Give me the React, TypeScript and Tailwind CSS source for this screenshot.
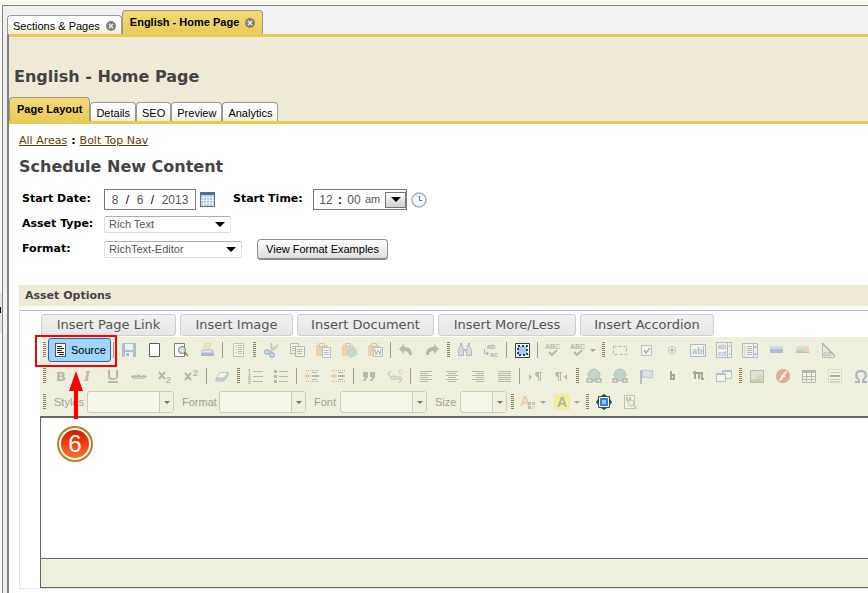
import React from "react";

const G = "#4d5a52";
const B = "#3c55b0";

const icons: Record<string, React.ReactNode> = {
  save: (
    <>
      <path fill="#3564c4" d="M1 1h14v14H2L1 14z" />
      <path fill="#f4f6ff" d="M4 2h8v6H4zM4 10h8v5H4z" />
      <path fill="#3564c4" d="M5 11h3v3H5z" />
    </>
  ),
  page: <path fill="#fff" stroke="#47524f" d="M2.500 1.500h10v13h-10z" />,
  preview: (
    <>
      <path fill="#fff" stroke="#5b6b66" d="M1.500 1.500h10v13h-10z" />
      <circle cx="9" cy="8" r="3.500" fill="#d0e0e4" stroke="#5b6b66" />
      <path stroke="#4b5a55" strokeWidth="2" d="M11.500 10.500l2 2" />
      <path stroke="#e08030" strokeWidth="2" d="M13 12l2 2" />
    </>
  ),
  print: (
    <>
      <path fill="#f7cf94" stroke="#d9a055" d="M6.500 1.500h5l-1 6h-6z" />
      <path fill="#7f9fe0" d="M2 9l2-2h8l3 2v3H2z" />
      <path fill="#2f50a8" d="M2 11h13v3H2z" />
      <path fill="#e9edff" d="M4 9h8v1H4z" />
    </>
  ),
  template: (
    <>
      <path fill="#fff" stroke="#6c7570" d="M3.500 1.500h10v13h-10z" />
      <path stroke="#ce9a3f" d="M5 4.500h2M5 7.500h2M5 10.500h2" />
      <path stroke="#5b6660" d="M8 3.500h4M8 5.500h4M8 7.500h4M8 9.500h4M8 11.500h4" />
    </>
  ),
  cut: (
    <>
      <path stroke="#7d8a96" strokeWidth="2" fill="none" d="M8 1l1 8M15 3L7 10" />
      <circle cx="4" cy="10" r="2" fill="none" stroke="#3667c9" strokeWidth="2" />
      <circle cx="9" cy="13" r="2" fill="none" stroke="#3667c9" strokeWidth="2" />
    </>
  ),
  copy: (
    <>
      <path fill="#fff" stroke={G} d="M1.500 1.500h8v10h-8z" />
      <path stroke={G} d="M3 4.500h4M3 6.500h4M3 8.500h4" />
      <path fill="#fff" stroke={G} d="M6.500 4.500h9v10h-9z" />
      <path stroke={G} d="M8 7.500h5M8 9.500h5M8 11.500h5" />
    </>
  ),
  paste: (
    <>
      <path fill="#eda251" d="M1 3h12v11H1z" />
      <path fill="#f7e3c4" stroke="#9b7c53" d="M4.500 1.500h5v3h-5z" />
      <path fill="#fff" stroke="#4c6fc0" d="M7.500 5.500h8v10h-8z" />
      <path stroke="#4c6fc0" d="M9 8.500h5M9 10.500h5M9 12.500h5" />
    </>
  ),
  pasteText: (
    <>
      <path fill="#eda251" d="M1 3h12v11H1z" />
      <path fill="#f7e3c4" stroke="#9b7c53" d="M4.500 1.500h5v3h-5z" />
      <path fill="#6fc0d8" stroke="#5396b3" d="M6.500 8.500l8-2 1 6-6 3z" />
    </>
  ),
  pasteWord: (
    <>
      <path fill="#eda251" d="M1 3h12v11H1z" />
      <path fill="#f7e3c4" stroke="#9b7c53" d="M4.500 1.500h5v3h-5z" />
      <path fill="#fff" stroke="#4c6fc0" d="M6.500 5.500h9v9h-9z" />
      <path fill="none" stroke="#2c3c6c" d="M8 7.500l1 5 2-4 2 4 1-5" />
    </>
  ),
  undo: <path fill={G} d="M1 7l5-5v3c5 0 8 2 8 8h-3c0-3-2-4-5-4v3z" />,
  redo: <path fill={G} d="M15 7l-5-5v3c-5 0-8 2-8 8h3c0-3 2-4 5-4v3z" />,
  find: (
    <>
      <path fill="#b5bdea" stroke="#4c5bad" d="M3.500 3.500h2l1 5v5h-5v-5zM10.500 3.500h2l2 5v5h-5v-5z" />
      <path stroke="#4c5bad" strokeWidth="2" d="M6 8h4M4 1v3M12 1v3" />
    </>
  ),
  replace: (
    <>
      <text x="4" y="7" fontSize="7" fontWeight="bold" fill="#3e4aa0">ab</text>
      <path fill="none" stroke="#3e4aa0" d="M1.500 7v4.500h4M3.500 9.500l2 2-2 2" />
      <text x="7" y="15" fontSize="7" fontWeight="bold" fill="#6a50a0">ac</text>
    </>
  ),
  selectAll: (
    <>
      <path fill="#fff" stroke="#234651" d="M1.500 1.500h14v14h-14z" />
      <path fill="#a8c6f3" stroke="#1d4655" strokeWidth="2" strokeDasharray="2 2" d="M4 4h9v9H4z" />
    </>
  ),
  spell: (
    <>
      <text x="0" y="7" fontSize="7" fontWeight="bold" fill={G}>ABC</text>
      <path fill="none" stroke={G} strokeWidth="2" d="M4 10l3 3 5-5" />
    </>
  ),
  form: <path fill="none" stroke="#3c4c8c" strokeDasharray="3 2" d="M1.500 4.500h13v8h-13z" />,
  check: (
    <>
      <path fill="#fff" stroke="#6474a8" d="M3.500 3.500h10v10h-10z" />
      <path fill="none" stroke="#35477f" strokeWidth="1.500" d="M6 8l2 3 4-5" />
    </>
  ),
  radio: (
    <>
      <circle cx="8" cy="8" r="3.500" fill="#fff" stroke="#4c63b5" />
      <circle cx="8" cy="8" r="1.500" fill="#20304f" />
    </>
  ),
  textField: (
    <>
      <path fill="#fff" stroke={B} d="M.5 2.500h15v12H.5z" />
      <text x="2" y="12" fontSize="9" fontWeight="bold" fill={B}>ab</text>
      <path stroke={B} d="M13.500 4v9" />
    </>
  ),
  textarea: (
    <>
      <path fill="#fff" stroke={B} d="M.5 .5h15v15H.5zM11.500 1v14" />
      <text x="2" y="7" fontSize="7" fontWeight="bold" fill={B}>ab</text>
      <text x="2" y="14" fontSize="7" fontWeight="bold" fill={B}>cd</text>
      <path stroke={B} d="M13.500 3v2M13.500 11v2" />
    </>
  ),
  list: (
    <>
      <path fill="#fff" stroke={B} d="M.5 1.500h15v14H.5z" />
      <path fill="#f2c37c" d="M2 3h2v11H2z" />
      <path stroke={B} d="M5 4.500h5M5 6.500h5M5 8.500h5M5 10.500h5M5 12.500h5M11.500 2v13" />
      <path stroke="#2b4c95" strokeWidth="2" d="M13.500 4v2M13.500 11v2" />
    </>
  ),
  button: (
    <>
      <path fill="#97b4ee" d="M2 4h13v7H2z" />
      <path fill="#3c67c6" d="M2 7h13v4H2z" />
    </>
  ),
  imageButton: (
    <>
      <path fill="#a9c6f4" d="M2 4h13v7H2z" />
      <path fill="#58a065" d="M2 9l4-2 5 2v2H2z" />
      <path fill="#e7a14c" d="M9 6h6v4H9z" />
      <path fill="#456cb8" d="M2 10h13v1H2z" />
    </>
  ),
  hidden: (
    <>
      <path fill="#dde4f2" d="M2 2l13 13H2z" />
      <text x="3" y="14" fontSize="7" fontWeight="bold" fill={G}>cd</text>
      <path stroke="#3c4640" strokeWidth="1.500" d="M2 1l13 13" />
      <path fill="none" stroke="#4a5ba0" d="M2.500 2v13.500H15" />
    </>
  ),
  bold: <text x="3" y="13" fontSize="13" fontWeight="bold" fontFamily="DejaVu Sans, sans-serif" fill={G}>B</text>,
  italic: <text x="5" y="13" fontSize="13" fontWeight="bold" fontStyle="italic" fontFamily="DejaVu Serif, serif" fill={G}>I</text>,
  underline: (
    <>
      <path fill="none" stroke={G} strokeWidth="2" d="M4 2v6q0 3 4 3t4-3V2" />
      <path stroke={G} strokeWidth="2" d="M3 14h10" />
    </>
  ),
  strike: (
    <>
      <text x="1" y="11" fontSize="8" fontWeight="bold" fill={G}>abc</text>
      <path stroke={G} d="M0 8.500h16" />
    </>
  ),
  sub: (
    <>
      <path stroke={G} strokeWidth="2" d="M2 4l6 7M8 4l-6 7" />
      <text x="9" y="15" fontSize="9" fontWeight="bold" fill={G}>2</text>
    </>
  ),
  sup: (
    <>
      <path stroke={G} strokeWidth="2" d="M2 5l6 7M8 5l-6 7" />
      <text x="10" y="8" fontSize="9" fontWeight="bold" fill={G}>2</text>
    </>
  ),
  eraser: (
    <>
      <path fill="#fff" stroke="#6e7da8" d="M6 4.500h8.500L11 10H2z" />
      <path fill="#7991d6" stroke="#6070a8" d="M2 10.500h8l4-6v3L10 13H2z" />
    </>
  ),
  ol: (
    <>
      <path stroke={G} d="M6 3.500h10M6 8.500h10M6 13.500h10" />
      <path fill="none" stroke={G} d="M1 1.500h1.500V5M1 6.500h2v2H1.500V10H4M1 11.500h2v4H1M1 13.500h2" />
    </>
  ),
  ul: (
    <>
      <path stroke={G} d="M6 3.500h9M6 8.500h9M6 13.500h9" />
      <path stroke={G} strokeWidth="3" d="M1 3.500h3M1 8.500h3M1 13.500h3" />
    </>
  ),
  outdent: (
    <>
      <path stroke={G} strokeDasharray="1 1" d="M2 2.500h13M2 13.500h13" />
      <path stroke={G} d="M8 4.500h5M8 7.500h7M8 8.500h7M8 11.500h5" />
      <path fill="#e79748" d="M0 8l4-3v2h3v2H4v2z" />
    </>
  ),
  indent: (
    <>
      <path stroke={G} strokeDasharray="1 1" d="M2 2.500h13M2 13.500h13" />
      <path stroke={G} d="M8 4.500h5M8 7.500h7M8 8.500h7M8 11.500h5" />
      <path fill="#e79748" d="M7 8L3 5v2H0v2h3v2z" />
    </>
  ),
  quote: <path fill={G} d="M2 4h5v5l-3 4H2l2-4H2zM9 4h5v5l-3 4H9l2-4H9z" />,
  div: (
    <>
      <text x="3" y="12" fontSize="8" fill={G}>div</text>
      <path fill="none" stroke={G} d="M4 3L1 6l3 3M13 9l2 2-3 4" />
      <path fill="none" stroke="#e79748" d="M13.500 1l2 3-2 3-2-3z" />
    </>
  ),
  left: <path stroke={G} d="M2 3.500h12M2 5.500h8M2 7.500h12M2 9.500h8M2 11.500h12M2 13.500h8" />,
  center: <path stroke={G} d="M2 3.500h12M4 5.500h8M2 7.500h12M4 9.500h8M2 11.500h12M4 13.500h8" />,
  right: <path stroke={G} d="M2 3.500h12M6 5.500h8M2 7.500h12M6 9.500h8M2 11.500h12M6 13.500h8" />,
  justify: <path stroke={G} d="M2 3.500h13M2 5.500h13M2 7.500h13M2 9.500h13M2 11.500h13M2 13.500h13" />,
  ltr: (
    <>
      <path fill={B} d="M2 6l3 3-3 3z" />
      <path fill={G} d="M10 4h5v1h-1v8h-1V5h-1v8h-1V9c-3 0-4-5-1-5z" />
    </>
  ),
  rtl: (
    <>
      <path fill={B} d="M14 6l-3 3 3 3z" />
      <path fill={G} d="M4 4h5v1H8v8H7V5H6v8H5V9C2 9 1 4 4 4z" />
    </>
  ),
  link: (
    <>
      <circle cx="8" cy="7" r="6" fill="#719ed9" stroke="#486c9c" />
      <path fill="#5fb650" d="M4 3l4-1-1 5-3 1zM10 3l3 2v4l-3-2z" />
      <path fill="#fff" stroke="#4d5652" strokeWidth="1.500" d="M1 11h5v3H1zM10 11h5v3h-5zM6 12.500h4" />
    </>
  ),
  unlink: (
    <>
      <circle cx="8" cy="7" r="6" fill="#719ed9" stroke="#486c9c" />
      <path fill="#5fb650" d="M4 3l4-1-1 5-3 1zM10 3l3 2v4l-3-2z" />
      <path fill="#fff" stroke="#4d5652" strokeWidth="1.500" d="M1 11h4v3H1zM11 11h4v3h-4z" />
    </>
  ),
  flag: (
    <>
      <path stroke="#5263a5" strokeWidth="2" d="M3 2v14" />
      <path fill="#b7d0f5" stroke="#5d7bb9" d="M4.500 2.500q3-1 5 0t5 0v7q-3 1-5 0t-5 0z" />
    </>
  ),
  letterB: (
    <>
      <path fill="#fff" opacity=".7" d="M1 1h14v14H1z" />
      <path fill="none" stroke="#222" strokeWidth="2" d="M7 3v8h3V7H7" />
    </>
  ),
  letterM: (
    <>
      <path fill="#fff" opacity=".7" d="M1 1h14v14H1z" />
      <path fill="none" stroke="#222" strokeWidth="2" d="M3 5l2-1v7M5 5h4v6M9 5h3v6h2" />
    </>
  ),
  windows: (
    <>
      <path fill="#fff" stroke="#4668b3" d="M6.500 2.500h9v8h-9z" />
      <path fill="#fff" stroke="#4668b3" d="M.5 5.500h9v8h-9z" />
      <path stroke="#4668b3" strokeWidth="2" d="M1 6h8M7 3h8" />
    </>
  ),
  image: (
    <>
      <path fill="#a7cdf5" stroke="#53604c" d="M1.500 2.500h13v12h-13z" />
      <circle cx="6" cy="6" r="2" fill="#efc746" />
      <path fill="#71a857" d="M2 12l6-2 6 2v2H2z" />
      <path fill="#dc9258" d="M8 8l3-2 3 2v3H8z" />
    </>
  ),
  flash: (
    <>
      <circle cx="8" cy="8" r="7" fill="#c7271d" />
      <path fill="none" stroke="#fff" strokeWidth="2" d="M12 4c-4 0-4 8-8 8M6 8h4" />
    </>
  ),
  table: (
    <>
      <path fill="#fff" stroke="#536057" d="M1.500 2.500h13v12h-13zM1.500 8.500h13M1.500 11.500h13M5.500 5v9M10.500 5v9" />
      <path fill="#536057" d="M1 2h14v3H1z" />
    </>
  ),
  hr: (
    <>
      <path fill="#fff" stroke="#b5b9ae" d="M1.500 1.500h13v13h-13z" />
      <path stroke="#7e8a7d" d="M3 4.500h10M3 11.500h10M3 13.500h10" />
      <path stroke="#344239" strokeWidth="2" d="M3 8h10" />
    </>
  ),
  omega: <path fill="none" stroke="#2b4692" strokeWidth="2" d="M2 14h4v-2C2 9 2 3 8 3s6 6 2 9v2h4" />,
  textColor: (
    <>
      <text x="0" y="12" fontSize="14" fontWeight="bold" fill="#e19448">A</text>
      <path fill="#ce4438" d="M8 8h3v3H8z" />
      <path fill="#56a050" d="M12 8h3v3h-3z" />
      <path fill="#4377d0" d="M8 12h3v3H8z" />
      <path fill="#e1c340" d="M12 12h3v3h-3z" />
    </>
  ),
  bgColor: (
    <>
      <path fill="#f8ec33" d="M0 0h16v16H0z" />
      <text x="3" y="13" fontSize="14" fontWeight="bold" fill="#37433b">A</text>
    </>
  ),
  maximize: (
    <>
      <path fill="#fff" stroke="#315559" d="M2.500 2.500h11v11h-11z" />
      <path fill="#2f82e4" d="M4 4h8v8H4z" />
      <path fill="#98c8fa" d="M6 6h4v4H6z" />
      <path fill="#234c52" d="M8 0l3 2H5zM8 16l3-2H5zM0 8l2-3v6zM16 8l-2-3v6z" />
    </>
  ),
  blocks: (
    <>
      <path fill="#fff" stroke="#68716a" d="M2.500 1.500h10v13h-10z" />
      <path stroke="#68716a" strokeWidth="2" d="M5 3v4M8 3v4" />
      <circle cx="9" cy="9" r="3" fill="#e4ece8" stroke="#68716a" />
      <path stroke="#cc8a4b" strokeWidth="2" d="M11 11l4 4" />
    </>
  ),
};

const tones: Record<string, string> = {
  maximize: "opacity-100",
  selectAll: "opacity-100",
  page: "opacity-90",
  preview: "opacity-80",
};

function Icon({ name }: { name: string }) {
  return (
    <svg viewBox="0 0 16 16" className={`size-4 shrink-0 ${tones[name] ?? "opacity-35"}`} fontFamily="Liberation Sans, sans-serif">
      {icons[name]}
    </svg>
  );
}

function Grip() {
  return (
    <span className="flex w-[7px] shrink-0 justify-center">
      <span className="h-4 w-[3px] bg-[repeating-linear-gradient(to_bottom,#8a8064_0px,#8a8064_1px,transparent_1px,transparent_2px)]" />
    </span>
  );
}

function Sep() {
  return (
    <span className="flex w-[5px] shrink-0 justify-center">
      <span className="h-4 w-px bg-[#9c9c94]" />
    </span>
  );
}

function Caret() {
  return <span className="block size-0 border-x-3 border-t-3 border-x-transparent border-t-[#77776e]" />;
}

function Tool({ name, menu = false }: { name: string; menu?: boolean }) {
  return (
    <button type="button" aria-label={name} className={`flex h-6 shrink-0 items-center ${menu ? "w-[34px] gap-1 pl-1" : "w-[26px] justify-center"}`}>
      <Icon name={name} />
      {menu && <span className="opacity-60"><Caret /></span>}
    </button>
  );
}

function Tools({ items }: { items: string }) {
  return (
    <>
      {items.split(" ").map((n, i) =>
        n === "|" ? <Sep key={i} /> : n === "#" ? <Grip key={i} /> : n.endsWith("+") ? <Tool key={i} name={n.slice(0, -1)} menu /> : <Tool key={i} name={n} />
      )}
    </>
  );
}

function Combo({ label, labelWidth, boxWidth }: { label: string; labelWidth: string; boxWidth: string }) {
  return (
    <label className="flex shrink-0 items-center pl-1.5 text-[11px] text-[#a2a297]">
      <span className={labelWidth}>{label}</span>
      <span className={`relative flex h-[22px] ${boxWidth}`}>
        <select className="size-full appearance-none rounded-[3px] border border-[#cccdb6] bg-[#f5f5ea]" />
        <span className="pointer-events-none absolute inset-y-px right-px flex w-3.5 items-center justify-center border-l border-[#cccdb6] bg-[#eeefdf]">
          <Caret />
        </span>
      </span>
    </label>
  );
}

function CloseMark() {
  return (
    <svg viewBox="0 0 10 10" className="size-2.5">
      <circle cx="5" cy="5" r="5" fill="#808080" />
      <path d="M3 3l4 4M7 3L3 7" stroke="#f4f0e4" strokeWidth="1.500" />
    </svg>
  );
}

function Tab({ label, active = false, closable = false }: { label: string; active?: boolean; closable?: boolean }) {
  return (
    <button
      type="button"
      className={`flex shrink-0 items-center gap-1.5 rounded-t border border-b-0 border-[#999] text-[11px] text-black ${
        active
          ? "h-6 bg-linear-to-b from-[#f3da76] to-[#e9cb57] px-[7px] font-bold"
          : "h-[19px] bg-linear-to-b from-white via-white to-[#f0efcb] px-[5px] pt-0.5"
      }`}
    >
      {label}
      {closable && <CloseMark />}
    </button>
  );
}

function PickList({ id, value, width }: { id: string; value: string; width: string }) {
  return (
    <span className={`relative flex h-[17px] ${width}`}>
      <select id={id} className="size-full appearance-none rounded-[2px] border border-[#dcdfe6] border-t-[#abadb3] bg-white pl-1 text-[11px] leading-none text-[#555]">
        <option>{value}</option>
      </select>
      <span className="pointer-events-none absolute top-1.5 right-1.5 border-x-5 border-t-5 border-x-transparent border-t-black" />
    </span>
  );
}

const labelClass = "font-['DejaVu_Sans',sans-serif] text-[11px] font-bold text-black";
const fieldClass = "bg-transparent p-0 text-center text-[12px] text-[#555] outline-none";
const inserts = [
  { text: "Insert Page Link", width: "w-[135px]" },
  { text: "Insert Image", width: "w-[113px]" },
  { text: "Insert Document", width: "w-[137px]" },
  { text: "Insert More/Less", width: "w-[138px]" },
  { text: "Insert Accordion", width: "w-[134px]" },
];

export default function App() {
  return (
    <div className="relative flex min-h-screen flex-col overflow-hidden bg-[#f9f9f0] pt-[5px] pl-[2px] font-['Liberation_Sans',Arial,sans-serif]">
      <div className="absolute top-[293px] left-0 h-10 w-[2px] bg-[#e4e4e4] pt-3.5">
        <div className="h-1.5 w-px bg-black" />
      </div>
      <div className="flex grow flex-col border-t border-l border-[#808080] bg-[#f1f1f1] pl-1">
        <nav className="flex h-7 items-end">
          <Tab label="Sections &amp; Pages" closable />
          <Tab label="English - Home Page" active closable />
        </nav>
        <div className="flex grow flex-col border-l-2 border-[#808080] bg-white">
          <header className="flex h-[90px] flex-col justify-between border-y-3 border-[#e6cb57] bg-[#efead8]">
            <h1 className="pt-7 pl-[5px] font-['DejaVu_Sans',sans-serif] text-[16px] leading-6 font-bold text-[#444]">English - Home Page</h1>
            <nav className="flex items-end">
              <Tab label="Page Layout" active />
              <Tab label="Details" />
              <Tab label="SEO" />
              <Tab label="Preview" />
              <Tab label="Analytics" />
            </nav>
          </header>

          <main className="pl-2.5">
            <div className="flex h-[25px] items-end gap-1 font-['DejaVu_Sans',sans-serif] text-[11px] leading-4 text-[#6b3a06]">
              <a href="#areas" className="underline">All Areas</a>
              <b className="text-black">:</b>
              <a href="#nav" className="underline">Bolt Top Nav</a>
            </div>
            <h2 className="pt-1.5 font-['DejaVu_Sans',sans-serif] text-[16px] leading-6 font-bold text-[#444]">Schedule New Content</h2>

            <form className="pt-2 pl-[3px]">
              <div className="flex h-[25px] items-center">
                <label htmlFor="month" className={`${labelClass} w-[82px]`}>Start Date:</label>
                <span className="flex h-[21px] w-[92px] items-center justify-between border border-[#7b7b7b] bg-white px-1.5 text-[12px] text-black">
                  <input id="month" defaultValue="8" className={`${fieldClass} w-2`} />/
                  <input aria-label="Day" defaultValue="6" className={`${fieldClass} w-2`} />/
                  <input aria-label="Year" defaultValue="2013" className={`${fieldClass} w-7`} />
                </span>
                <svg viewBox="0 0 15 15" className="ml-1 size-[15px]" shapeRendering="crispEdges">
                  <path fill="#b4c8e0" stroke="#54779f" d="M.5 .5h14v14H.5z" />
                  <path fill="#4a7098" d="M0 0h15v3H0z" />
                  <path stroke="#eef3f8" d="M1 5.500h13M1 8.500h13M1 11.500h13M3.500 3v11M6.500 3v11M9.500 3v11M12.500 3v11" />
                </svg>
                <label htmlFor="hour" className={`${labelClass} ml-[18px] w-20`}>Start Time:</label>
                <span className="flex h-[21px] w-[94px] items-center border border-[#7b7b7b] bg-white pl-1 text-[12px] font-bold text-black">
                  <input id="hour" defaultValue="12" className={`${fieldClass} w-4 font-normal`} />
                  <span className="px-1">:</span>
                  <input aria-label="Minute" defaultValue="00" className={`${fieldClass} w-4 font-normal`} />
                  <input aria-label="Meridiem" defaultValue="am" className="ml-auto w-5 bg-transparent text-[11px] font-normal text-[#555]" />
                  <button type="button" aria-label="Change time" className="flex h-4 w-[21px] items-center justify-center border border-[#777] bg-linear-to-b from-white to-[#cfcfcf]">
                    <span className="border-x-5 border-t-5 border-x-transparent border-t-black" />
                  </button>
                </span>
                <svg viewBox="0 0 16 16" className="ml-1 size-4" fill="none">
                  <circle cx="8" cy="8" r="7" fill="#f6f8fa" stroke="#a9b4bd" strokeWidth="1.500" />
                  <path stroke="#5d7690" d="M8.500 4v4.500H11" />
                </svg>
              </div>
              <div className="flex h-[25px] items-center">
                <label htmlFor="asset" className={`${labelClass} w-[82px]`}>Asset Type:</label>
                <PickList id="asset" value="Rich Text" width="w-[127px]" />
              </div>
              <div className="flex h-[25px] items-center">
                <label htmlFor="format" className={`${labelClass} w-[82px]`}>Format:</label>
                <PickList id="format" value="RichText-Editor" width="w-[138px]" />
                <button type="button" className="ml-[15px] h-[21px] w-[131px] rounded-[4px] border border-b-2 border-[#8c8c8c] bg-linear-to-b from-white to-[#dedede] text-[11px] text-black">
                  View Format Examples
                </button>
              </div>
            </form>

            <section className="mt-[23px] border-b border-l border-[#e5e5e5]">
              <h3 className="h-[21px] bg-[#efead8] pl-[5px] font-['DejaVu_Sans',sans-serif] text-[11px] leading-[21px] font-bold text-[#444]">Asset Options</h3>
              <div className="mt-1 border-t border-[#b9b5cb] pt-[3px] pl-5">
                <div className="flex gap-1 pb-px pl-px">
                  {inserts.map((b) => (
                    <button key={b.text} type="button" className={`h-[22px] shrink-0 rounded-[3px] border border-[#cfcfcf] bg-linear-to-b from-[#f0f0f0] to-[#e6e6e6] font-['DejaVu_Sans',sans-serif] text-[13px] leading-5 text-[#555] ${b.width}`}>
                      {b.text}
                    </button>
                  ))}
                </div>
                <div className="relative">
                  <div className="overflow-hidden bg-[#eeefdc] pb-px pl-px">
                    <div className="flex h-[26px] items-center">
                      <Grip />
                      <button type="button" className="flex h-6 w-[63px] shrink-0 items-center gap-0.5 rounded-[3px] border border-[#2f63b7] bg-[#a0d5ff] pl-1 text-[11px] text-black">
                        <svg viewBox="0 0 16 16" className="size-4" shapeRendering="crispEdges">
                          <path fill="#fff" stroke="#555" d="M2.500 1.500h10v13h-10z" />
                          <path stroke="#222" d="M4 4.500h5M4 6.500h7M4 8.500h5M4 10.500h7M6 12.500h5" />
                        </svg>
                        Source
                      </button>
                      <Tools items="| save page preview print | template # cut copy paste pasteText pasteWord | undo redo # find replace | selectAll | spell spell+ # form check radio textField textarea list button imageButton hidden" />
                    </div>
                    <div className="flex h-[26px] items-center">
                      <Tools items="# bold italic underline strike sub sup | eraser # ol ul | outdent indent | quote div | left center right justify | ltr rtl # link unlink flag letterB letterM windows # image flash table hr omega" />
                    </div>
                    <div className="flex h-[26px] items-center">
                      <Grip />
                      <Combo label="Styles" labelWidth="w-[33px]" boxWidth="w-[87px]" />
                      <span className="w-0.5 shrink-0" />
                      <Combo label="Format" labelWidth="w-[37px]" boxWidth="w-[87px]" />
                      <span className="w-0.5 shrink-0" />
                      <Combo label="Font" labelWidth="w-[26px]" boxWidth="w-[87px]" />
                      <span className="w-0.5 shrink-0" />
                      <Combo label="Size" labelWidth="w-[25px]" boxWidth="w-[47px]" />
                      <span className="w-0.5 shrink-0" />
                      <Tools items="# textColor+ bgColor+ # maximize blocks" />
                    </div>
                  </div>
                  <div className="border border-t-2 border-r-0 border-[#666]">
                    <textarea aria-label="Content" className="block h-[140px] w-full resize-none bg-white outline-none" />
                    <div className="h-[29px] border-t border-[#666] bg-[#eeefdc]" />
                  </div>
                  <div className="pointer-events-none absolute -top-0.5 -left-[5px] h-8 w-[82px] border-2 border-[#f00]" />
                  <svg viewBox="0 0 16 48" className="absolute top-[34px] left-7 h-12 w-4">
                    <path fill="#f00" d="M8 0l7 20h-5v28H6V20H1z" />
                  </svg>
                  <div className="absolute top-[89px] left-[17px] flex size-9 items-center justify-center rounded-full border-2 border-[#c47a22] bg-white p-0.5">
                    <span className="flex size-full items-center justify-center rounded-full bg-linear-to-b from-[#d01808] via-[#f04010] to-[#ff7030] text-[24px] text-white">6</span>
                  </div>
                </div>
              </div>
            </section>
          </main>
        </div>
      </div>
    </div>
  );
}
